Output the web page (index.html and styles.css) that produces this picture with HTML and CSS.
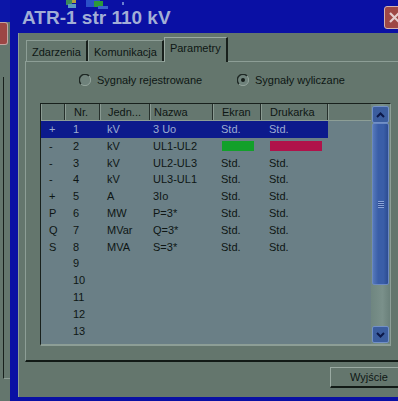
FILE: index.html
```html
<!DOCTYPE html>
<html lang="pl">
<head>
    <meta charset="UTF-8">
    <meta name="viewport" content="width=device-width, initial-scale=1.0">
    <title>ATR-1 str 110 kV</title>
    <link rel="stylesheet" href="styles.css">
</head>
<body>
    <div class="screen">
        <!-- window lying behind, only its edge is visible -->
        <div class="back">
            <div class="back-title"></div>
            <div class="back-close"></div>
            <div class="back-body"></div>
        </div>

        <div class="win">
            <div class="titlebar">
                <span class="title">ATR-1 str 110 kV</span>
                <div class="close">
                    <svg width="13" height="13" viewBox="0 0 13 13"><path d="M2 2 L11 11 M11 2 L2 11" stroke="#e4cccc" stroke-width="2.2"/></svg>
                </div>
            </div>

            <div class="client">
                <div class="tabs">
                    <div class="tab">Zdarzenia</div>
                    <div class="tab">Komunikacja</div>
                    <div class="tab active">Parametry</div>
                </div>

                <div class="panel">
                    <div class="radios">
                        <label class="radio first">
                            <svg width="12" height="12" viewBox="0 0 12 12">
                                <circle cx="6" cy="6" r="5.5" fill="#6f827b"/>
                                <path d="M10 2 A5.5 5.5 0 0 0 2 10" stroke="#1e2824" stroke-width="1.4" fill="none"/>
                                <path d="M2 10 A5.5 5.5 0 0 0 10 2" stroke="#93a39b" stroke-width="1" fill="none"/>
                            </svg>
                            <span>Sygnały rejestrowane</span>
                        </label>
                        <label class="radio">
                            <svg width="12" height="12" viewBox="0 0 12 12">
                                <circle cx="6" cy="6" r="5.5" fill="#6f827b"/>
                                <path d="M10 2 A5.5 5.5 0 0 0 2 10" stroke="#1e2824" stroke-width="1.4" fill="none"/>
                                <path d="M2 10 A5.5 5.5 0 0 0 10 2" stroke="#93a39b" stroke-width="1" fill="none"/>
                                <circle cx="6" cy="6" r="2" fill="#141c18"/>
                            </svg>
                            <span>Sygnały wyliczane</span>
                        </label>
                    </div>

                    <div class="list">
                        <div class="grid">
                            <div class="head">
                                <div class="hc c0"></div>
                                <div class="hc c1">Nr.</div>
                                <div class="hc c2">Jedn...</div>
                                <div class="hc c3">Nazwa</div>
                                <div class="hc c4">Ekran</div>
                                <div class="hc c5">Drukarka</div>
                                <div class="hc fill"></div>
                            </div>
                            <div class="rows" id="rows"></div>
                        </div>
                        <div class="scroll">
                            <div class="sb-btn">
                                <svg width="9" height="6" viewBox="0 0 9 6"><path d="M1 5 L4.5 1.5 L8 5" stroke="#0c1848" stroke-width="2" fill="none"/></svg>
                            </div>
                            <div class="thumb"><div class="grip"></div></div>
                            <div class="track"></div>
                            <div class="sb-btn">
                                <svg width="9" height="6" viewBox="0 0 9 6"><path d="M1 1 L4.5 4.5 L8 1" stroke="#0c1848" stroke-width="2" fill="none"/></svg>
                            </div>
                        </div>
                    </div>
                </div>

                <div class="buttons">
                    <div class="btn">Wyjście</div>
                </div>
            </div>
        </div>

        <svg class="glitch" width="70" height="13" viewBox="0 0 70 13">
            <rect x="2" y="0" width="6" height="5" fill="#3c8a5a"/>
            <rect x="4" y="4" width="8" height="4" fill="#5a9ac0"/>
            <rect x="8" y="0" width="4" height="3" fill="#b0a040"/>
            <rect x="22" y="0" width="14" height="7" fill="#2a50c8"/>
            <rect x="30" y="1" width="9" height="6" fill="#2c9a3a"/>
            <rect x="34" y="6" width="10" height="3" fill="#3a60d0"/>
            <rect x="58" y="2" width="2" height="3" fill="#6a80d0"/>
        </svg>
    </div>

    <script>
        const data = [
            ['+', '1', 'kV', '3 Uo', 'Std.', 'Std.'],
            ['-', '2', 'kV', 'UL1-UL2', 'green', 'red'],
            ['-', '3', 'kV', 'UL2-UL3', 'Std.', 'Std.'],
            ['-', '4', 'kV', 'UL3-UL1', 'Std.', 'Std.'],
            ['+', '5', 'A', '3Io', 'Std.', 'Std.'],
            ['P', '6', 'MW', 'P=3*', 'Std.', 'Std.'],
            ['Q', '7', 'MVar', 'Q=3*', 'Std.', 'Std.'],
            ['S', '8', 'MVA', 'S=3*', 'Std.', 'Std.'],
            ['', '9', '', '', '', ''],
            ['', '10', '', '', '', ''],
            ['', '11', '', '', '', ''],
            ['', '12', '', '', '', ''],
            ['', '13', '', '', '', '']
        ];

        const rows = document.getElementById('rows');
        data.forEach((row, index) => {
            const rowDiv = document.createElement('div');
            rowDiv.className = index === 0 ? 'row selected' : 'row';
            row.forEach((value, col) => {
                const cell = document.createElement('div');
                cell.className = `cell c${col}`;
                if (value === 'green' || value === 'red') {
                    cell.innerHTML = `<span class="swatch ${value}"></span>`;
                } else {
                    cell.textContent = value;
                }
                rowDiv.appendChild(cell);
            });
            rows.appendChild(rowDiv);
        });
    </script>
</body>
</html>
```

FILE: styles.css
```css
body {
    margin: 0;
    font-family: "Liberation Sans", Arial, sans-serif;
    font-size: 11px;
    color: #0e1614;
    background-color: #64766d;
}
.screen {
    position: relative;
    display: flex;
    width: 398px;
    height: 401px;
    overflow: hidden;
}

/* back window */
.back {
    width: 10px;
    flex: none;
    display: flex;
    flex-direction: column;
    background-color: #64766d;
}
.back-title {
    height: 22px;
    background-color: #0c16a8;
}
.back-close {
    width: 8px;
    height: 23px;
    box-sizing: border-box;
    background-color: #9c4644;
    border: 1px solid #c4a4a2;
    border-left: 0;
    border-radius: 0 3px 3px 0;
}
.back-body {
    flex: 1;
    margin: 32px 0 22px 3px;
    border-left: 1px solid #18201c;
    border-bottom: 1px solid #8e9e96;
}

/* main window */
.win {
    width: 392px;
    flex: none;
    display: flex;
    flex-direction: column;
    padding: 0 0 4px 8px;
    background-color: #0a10a4;
}
.titlebar {
    height: 33px;
    display: flex;
    align-items: flex-start;
}
.title {
    padding: 7px 0 0 4px;
    font-size: 19px;
    font-weight: bold;
    color: #a2aed6;
}
.close {
    width: 21px;
    height: 23px;
    box-sizing: border-box;
    margin: 6px 5px 0 auto;
    display: flex;
    align-items: center;
    justify-content: center;
    background-color: #9e4846;
    border: 1px solid #d2b2b0;
    border-radius: 3px;
}
.client {
    flex: 1;
    display: flex;
    flex-direction: column;
    padding: 4px 0 0 6px;
    background-color: #64766d;
    border-left: 1px solid #8d9e96;
}

/* tabs */
.tabs {
    height: 24px;
    display: flex;
    align-items: flex-end;
    padding-left: 1px;
}
.tab {
    height: 21px;
    box-sizing: border-box;
    padding: 0 5px;
    line-height: 22px;
    border-top: 1px solid #8d9e96;
    border-left: 1px solid #8d9e96;
    border-right: 2px solid #18201c;
}
.tab.active {
    height: 25px;
    margin-bottom: -1px;
    line-height: 20px;
    border-top: 1px solid #9aaaa2;
    border-left: 1px solid #9aaaa2;
    background-color: #64766d;
    position: relative;
}
.panel {
    height: 301px;
    box-sizing: border-box;
    border-top: 1px solid #8d9e96;
    border-left: 1px solid #8d9e96;
    border-bottom: 2px solid #121a16;
}
.radios {
    display: flex;
    align-items: center;
    height: 14px;
    margin: 11px 0 0 53px;
}
.radio {
    display: flex;
    align-items: center;
    gap: 6px;
}
.radio.first {
    width: 158px;
}

/* list view */
.list {
    display: flex;
    width: 351px;
    height: 243px;
    box-sizing: border-box;
    margin: 16px 0 0 14px;
    background-color: #6a7f86;
    border-top: 1px solid #18201c;
    border-left: 1px solid #18201c;
    border-right: 1px solid #8d9e96;
    border-bottom: 2px solid #8d9e96;
}
.grid {
    flex: 1;
}
.head {
    display: grid;
    grid-template-columns: 24px 35px 50px 63px 48px 67px 1fr;
    height: 17px;
    background-color: #65776f;
    border-bottom: 1px solid #8d9e96;
    box-sizing: border-box;
}
.hc {
    line-height: 16px;
    border-right: 1px solid #26302c;
    border-left: 1px solid #8a9a92;
    white-space: nowrap;
    overflow: hidden;
}
.hc.fill {
    border-right: 0;
}
.row {
    display: grid;
    grid-template-columns: 24px 35px 50px 63px 48px 67px;
    width: 287px;
    height: 16.8px;
    line-height: 16.8px;
}
.row.selected {
    background-color: #0c1a8c;
    color: #9cacd2;
}
.cell {
    white-space: nowrap;
}
.c0 { padding-left: 8px; }
.c1 { padding-left: 8px; }
.c2 { padding-left: 7px; }
.c3 { padding-left: 3px; }
.c4 { padding-left: 8px; }
.c5 { padding-left: 8px; }
.swatch {
    display: inline-block;
    height: 10px;
    vertical-align: -1px;
}
.swatch.green {
    width: 32px;
    margin-left: 1px;
    background-color: #12a02a;
}
.swatch.red {
    width: 52px;
    margin-left: 1px;
    background-color: #b0124a;
}

/* scrollbar */
.scroll {
    width: 19px;
    display: flex;
    flex-direction: column;
    padding: 2px 1px 1px 1px;
    box-sizing: border-box;
    background: linear-gradient(to right, #6f8680, #7a908a 60%, #6a807a);
}
.sb-btn {
    height: 17px;
    flex: none;
    box-sizing: border-box;
    display: flex;
    align-items: center;
    justify-content: center;
    background-color: #3b5d9e;
    border: 1px solid #7290c6;
    border-radius: 2px;
}
.thumb {
    height: 162px;
    flex: none;
    box-sizing: border-box;
    display: flex;
    align-items: center;
    justify-content: center;
    background: linear-gradient(to right, #5578ba, #3a5ea8 35%, #3a5ea8 70%, #2c4c92);
    border: 1px solid #6a88c2;
    border-radius: 2px;
}
.grip {
    width: 6px;
    height: 7px;
    background: repeating-linear-gradient(to bottom, #8aa4d8 0 1px, #2a4890 1px 2px);
}
.track {
    flex: 1;
}

/* bottom button */
.buttons {
    padding: 5px 0 0 305px;
}
.btn {
    width: 76px;
    height: 21px;
    box-sizing: border-box;
    padding-left: 19px;
    line-height: 19px;
    border-top: 1px solid #9aaaa2;
    border-left: 1px solid #9aaaa2;
    border-bottom: 2px solid #121a16;
}

.glitch {
    position: absolute;
    left: 64px;
    top: 0;
}
```
